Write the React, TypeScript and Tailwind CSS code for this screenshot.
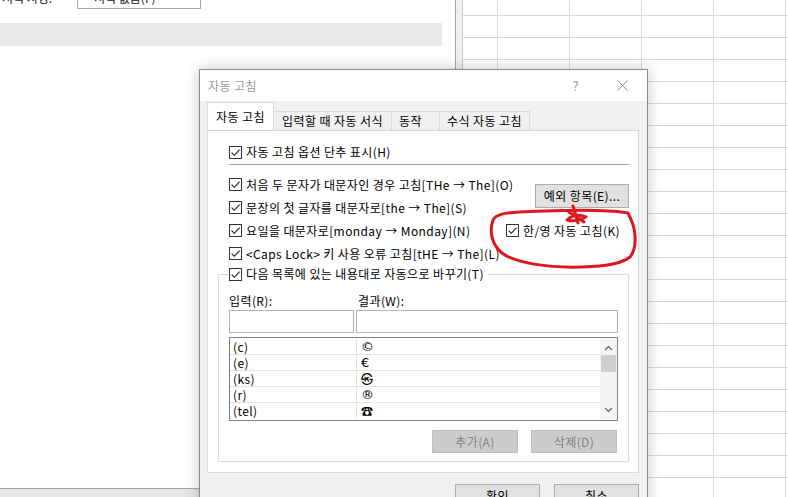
import React from 'react'

const FONT = "font-['Noto_Sans_CJK_KR','Noto_Sans',sans-serif]"

const sheetCols = ['w-[35px]', 'w-[72px]', 'w-[72px]', 'w-[72px]', 'w-[72px]', 'w-[40px]']

// 기호 폰트: ©, €, ® 는 DejaVu 가 원본 크기에 더 가까움
const replaceList = [
    { from: '(c)', to: '©', sym: true },
    { from: '(e)', to: '€', sym: true },
    { from: '(ks)', to: '㉿', sym: false },
    { from: '(r)', to: '®', sym: true },
    { from: '(tel)', to: '☎', sym: false },
]

function CheckBox() {
    return (
        <span className="flex h-[13px] w-[13px] shrink-0 items-center justify-center border border-[#333333] bg-white">
            <svg viewBox="0 0 11 11" className="h-[11px] w-[11px]">
                <path d="M1.6 5.6 L4.3 8.3 L9.6 2.6" fill="none" stroke="#1a1a1a" strokeWidth="1.1" />
            </svg>
        </span>
    )
}

function CheckLabel({ text, className = '' }: { text: string; className?: string }) {
    return (
        <div className={`flex items-center gap-[4px] whitespace-nowrap ${className}`}>
            <CheckBox />
            <span>{text}</span>
        </div>
    )
}

function Sheet() {
    return (
        <div className="-mt-[6px] flex flex-col">
            {Array.from({ length: 24 }).map((_, r) => (
                <div key={r} className="flex h-[22px] shrink-0">
                    {sheetCols.map((w, c) => (
                        <div key={c} className={`${w} shrink-0 border-b border-r border-[#d9d9d9]`} />
                    ))}
                </div>
            ))}
        </div>
    )
}

export default function App() {
    return (
        <div className={`relative flex h-[497px] w-[788px] overflow-hidden bg-white text-[12px] text-black ${FONT}`}>
            {/* 뒤쪽 창 */}
            <div className="flex w-[456px] shrink-0 flex-col border-r border-[#a3a3a3] bg-white">
                <div className="h-[9px] shrink-0 overflow-hidden">
                    <div className="-mt-[14px] flex items-center text-[#222]">
                        <span className="w-[77px] whitespace-nowrap pl-[2px]">서식 지정:</span>
                        <div className="flex h-[23px] w-[124px] items-center border border-[#a6a6a6] pl-[16px]">서식 없음(F)</div>
                    </div>
                </div>
                <div className="mt-[14px] h-[23px] w-[442px] shrink-0 bg-[#e9e9e9]" />
                <div className="flex-1" />
                <div className="h-[9px] shrink-0 border-t border-[#a8a8a8] bg-[#e6e6e6]" />
            </div>
            <div className="w-[7px] shrink-0 border-r border-[#c8c8c8] bg-[#f0f0f0]" />
            <div className="flex-1 overflow-hidden">
                <Sheet />
            </div>

            {/* 자동 고침 대화 상자 */}
            <div className="absolute left-[199px] top-[69px] flex h-[440px] w-[449px] flex-col border border-[#8c8c8c] bg-[#f0f0f0] tracking-[0.4px] shadow-[0_0_14px_rgba(0,0,0,0.22)]">
                <div className="flex h-[31px] shrink-0 items-center bg-white pl-[8px] text-[#9a9a9a]">
                    <span className="flex-1">자동 고침</span>
                    <span className="mr-[38px] text-[13px]">?</span>
                    <svg viewBox="0 0 11 11" className="mr-[19px] h-[11px] w-[11px]">
                        <path d="M0.5 0.5 L10.5 10.5 M10.5 0.5 L0.5 10.5" stroke="#8a8a8a" strokeWidth="1" />
                    </svg>
                </div>

                {/* 탭 */}
                <div className="mt-[1px] flex h-[29px] shrink-0 items-end pl-[7px]">
                    <div className="flex h-[29px] w-[67px] items-center justify-center border border-b-0 border-[#d9d9d9] bg-white">자동 고침</div>
                    <div className="flex h-[20px] w-[118px] items-center justify-center border-b border-r border-t border-[#d9d9d9]">입력할 때 자동 서식</div>
                    <div className="flex h-[20px] w-[48px] items-center border-b border-r border-t border-[#d9d9d9] pl-[7px]">동작</div>
                    <div className="flex h-[20px] w-[90px] items-center justify-center border-b border-r border-t border-[#d9d9d9]">수식 자동 고침</div>
                </div>

                <div className="-mt-px ml-[7px] flex h-[343px] w-[432px] shrink-0 flex-col border border-[#d9d9d9] bg-white pl-[21px] pr-[9px] pt-[13px]">
                    <CheckLabel text="자동 고침 옵션 단추 표시(H)" className="h-[16px]" />
                    <div className="mt-[4px] h-px bg-[#a0a0a0]" />

                    <div className="mt-[8px] grid grid-cols-[minmax(0,1fr)_120px]">
                        <div className="flex flex-col">
                            <CheckLabel text="처음 두 문자가 대문자인 경우 고침[THe → The](O)" className="h-[23px]" />
                            <CheckLabel text="문장의 첫 글자를 대문자로[the → The](S)" className="h-[23px]" />
                            <CheckLabel text="요일을 대문자로[monday → Monday](N)" className="h-[23px]" />
                            <CheckLabel text="<Caps Lock> 키 사용 오류 고침[tHE → The](L)" className="h-[23px]" />
                        </div>
                        <div className="flex flex-col pt-[11px]">
                            <button className="flex h-[24px] w-[94px] items-center justify-center self-end border border-[#adadad] bg-[#e1e1e1] tracking-[0.4px]">
                                예외 항목(E)...
                            </button>
                            <CheckLabel text="한/영 자동 고침(K)" className="-ml-[3px] mt-[11px] h-[23px]" />
                        </div>
                    </div>

                    <fieldset className="-ml-[11px] mt-[1px] border border-[#dcdcdc] px-[10px] pb-[8px]">
                        <legend className="pr-[3px]">
                            <CheckLabel text="다음 목록에 있는 내용대로 자동으로 바꾸기(T)" className="h-[16px]" />
                        </legend>
                        <div className="mt-[10px] grid h-[16px] grid-cols-[127px_1fr] items-center">
                            <span>입력(R):</span>
                            <span className="pl-[2px]">결과(W):</span>
                        </div>
                        <div className="mt-[2px] grid grid-cols-[127px_1fr]">
                            <div className="h-[23px] w-[125px] border border-[#b4b4b4] bg-white" />
                            <div className="h-[23px] border border-[#b4b4b4] bg-white" />
                        </div>
                        <div className="mt-[4px] flex h-[84px] border border-[#828282] bg-white">
                            <div className="flex flex-1 flex-col pt-px">
                                {replaceList.map((item) => (
                                    <div key={item.from} className="flex h-[16px] shrink-0 border-b border-[#e3e3e3] last:border-b-0">
                                        <span className="flex w-[127px] items-center border-r border-[#e3e3e3] pl-[3px]">{item.from}</span>
                                        <span className={`flex items-center pl-[4px] ${item.sym ? "font-['DejaVu_Sans',sans-serif] text-[13px]" : ''}`}>{item.to}</span>
                                    </div>
                                ))}
                            </div>
                            <div className="flex w-[17px] flex-col items-center bg-[#f4f4f4]">
                                <svg viewBox="0 0 9 6" className="mt-[7px] h-[6px] w-[9px]">
                                    <path d="M1 5 L4.5 1.5 L8 5" fill="none" stroke="#606060" strokeWidth="1.2" />
                                </svg>
                                <div className="mt-[4px] h-[17px] w-[15px] bg-[#cdcdcd]" />
                                <div className="flex-1" />
                                <svg viewBox="0 0 9 6" className="mb-[7px] h-[6px] w-[9px]">
                                    <path d="M1 1 L4.5 4.5 L8 1" fill="none" stroke="#606060" strokeWidth="1.2" />
                                </svg>
                            </div>
                        </div>
                        <div className="mt-[9px] flex justify-end gap-[13px] pr-px">
                            <button className="flex h-[23px] w-[86px] items-center justify-center border border-[#bfbfbf] bg-[#cccccc] tracking-[0.4px] text-[#838383]">추가(A)</button>
                            <button className="flex h-[23px] w-[86px] items-center justify-center border border-[#bfbfbf] bg-[#cccccc] tracking-[0.4px] text-[#838383]">삭제(D)</button>
                        </div>
                    </fieldset>
                </div>

                <div className="mt-[11px] flex justify-end gap-[14px] pr-[8px]">
                    <button className="flex h-[23px] w-[85px] items-center justify-center border border-[#adadad] bg-[#e1e1e1] tracking-[0.4px]">확인</button>
                    <button className="flex h-[23px] w-[85px] items-center justify-center border border-[#adadad] bg-[#e1e1e1] tracking-[0.4px]">취소</button>
                </div>
            </div>

            {/* 빨간 펜 표시 */}
            <svg className="pointer-events-none absolute left-0 top-0 h-[497px] w-[788px]" viewBox="0 0 788 497">
                <path
                    d="M628 213 C605 209 560 210 520 212 C505 213 496 214 493 220 C489 232 492 245 502 253 C515 263 548 268 582 267 C606 266 621 264 630 257 C637 249 636 232 632 222 C630 217 629 215 628 213"
                    fill="none"
                    stroke="#e0161f"
                    strokeWidth="3"
                    strokeLinecap="round"
                    strokeLinejoin="round"
                />
                <path
                    d="M573 206 L578 223 M567 220 C572 215 579 214 586 217 C580 220 573 222 567 220 M569 212 L584 222"
                    fill="none"
                    stroke="#e0161f"
                    strokeWidth="3"
                    strokeLinecap="round"
                    strokeLinejoin="round"
                />
            </svg>
        </div>
    )
}
